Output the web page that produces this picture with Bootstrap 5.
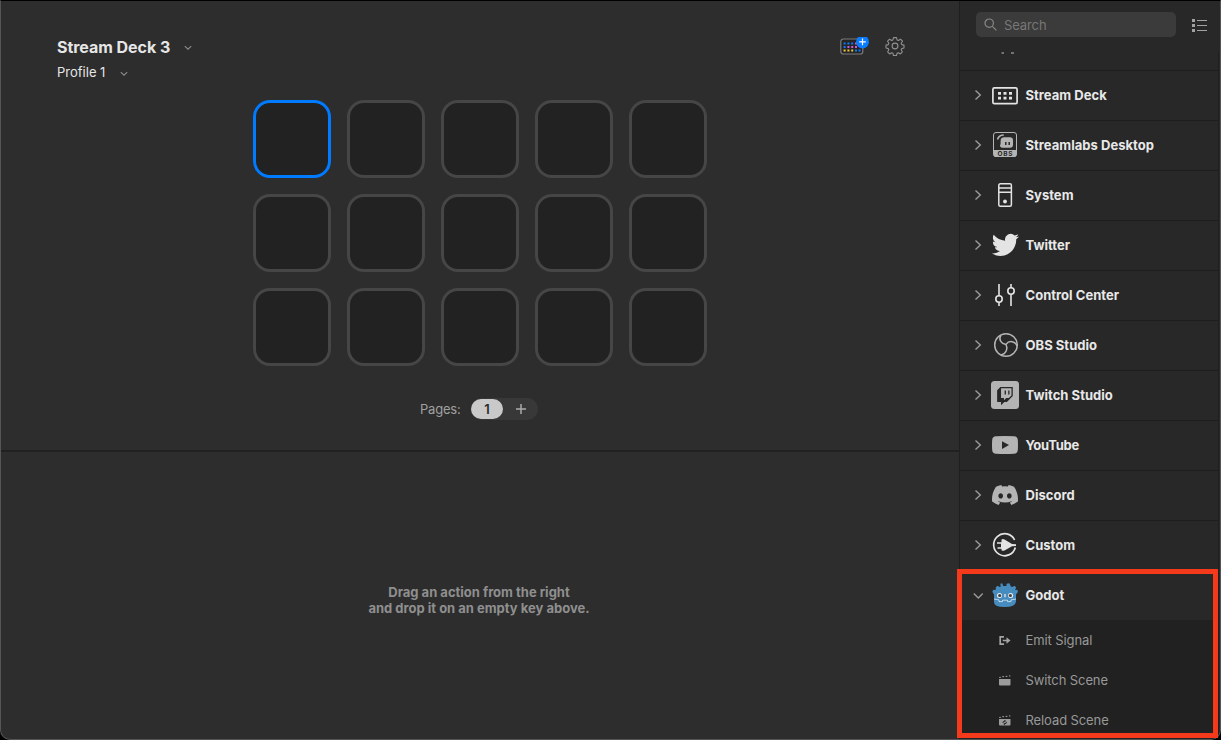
<!DOCTYPE html>
<html lang="en">
<head>
<meta charset="utf-8">
<title>Stream Deck</title>
<link rel="stylesheet" href="https://cdn.jsdelivr.net/npm/bootstrap@5.3.0/dist/css/bootstrap.min.css">
<style>
body{font-family:Inter,"Liberation Sans",sans-serif;font-size:13px;line-height:16px;background:#000;color:#e6e6e6;height:740px;overflow:hidden}
svg{display:block;flex:none}
.window{height:740px;border:1px solid #555;border-top-color:#000;border-radius:0 0 10px 10px;background:#2d2d2d;overflow:hidden}
.deck{width:959px;border-right:1px solid #1f1f1f}
.canvas-area{height:451px;border-bottom:2px solid #212121;padding:36px 54px 0 56px}
.device{font-size:16px;line-height:20px;letter-spacing:-.04px;font-weight:700}
.profile{letter-spacing:0;margin-top:7px}
.keys{display:grid;grid-template-columns:repeat(5,78px);grid-auto-rows:78px;gap:16px;justify-content:center;margin:20px 2px 0 0}
.key{border:3px solid #464646;border-radius:17px;background:#222}
.key.active{border-color:#007aff}
.pages{color:#a0a0a0;margin:32px 0 0 363px;letter-spacing:-.2px}
.pager{width:67px;height:22px;background:#383838;margin-right:367px}
.page-now{width:32px;height:20px;background:#c9c9c9;color:#2a2a2a;font-weight:600;line-height:21px}
.hint{color:#8f8f8f;font-weight:700;margin:9px 2px 0 0}
.actions{width:261px;background:#282828}
.top-tools{height:51px;padding:11px 13px 0 16px}
.search{width:200px;height:25px;border-radius:5px;background:#3b3b3b;color:#777;padding-left:8px;gap:7px;letter-spacing:-.1px}
.list{width:259px;border-right:1px solid #1f1f1f}
.stub{height:18px;padding-left:41px}
.plugin{height:50px;border-top:1px solid #1e1e1e;padding-left:13px;font-weight:700;color:#e8e8e8}
.plugin .arrow{margin:0 7px 2px 0}
.plugin span{margin:0 0 2px 5.500px;letter-spacing:.03px}
.children{background:#212121;height:120px;color:#989898}
.child{height:40px;padding-left:37px}
.child span{margin-left:13.500px;letter-spacing:-.1px}
.marker{position:absolute;left:957px;top:569px;width:261px;height:169px;border:5px solid #f5391b;z-index:3}
</style>
</head>
<body>
<svg width="0" height="0" class="position-absolute"><defs>
<symbol id="chev" viewBox="0 0 10 12"><path d="M2.500 1.500 7.300 6 2.500 10.500" fill="none" stroke="#9a9a9a" stroke-width="1.400"/></symbol>
<symbol id="down" viewBox="0 0 8 6"><path d="M.8 1.200 4 4.200 7.200 1.200" fill="none" stroke="#8c8c8c" stroke-width="1.100"/></symbol>
</defs></svg>
<div class="window d-flex">
  <main class="deck d-flex flex-column flex-shrink-0">
    <section class="canvas-area">
      <div class="d-flex justify-content-between">
        <div>
          <div class="device d-flex align-items-center"><span>Stream Deck 3</span><svg width="8" height="6" style="margin:2px 0 0 14px"><use href="#down"/></svg></div>
          <div class="profile d-flex align-items-center"><span>Profile 1</span><svg width="8" height="6" style="margin:3px 0 0 15px"><use href="#down"/></svg></div>
        </div>
        <div class="d-flex">
          <svg width="65" height="24" viewBox="0 0 65 24">
            <rect x=".8" y="2" width="22" height="15" rx="2.500" fill="#252525" stroke="#7c7c7c" stroke-width="1.200"/>
            <path d="M3.600 5.600h2v2h-2zM7.400 5.600h2v2h-2zM11.200 5.600h2v2h-2zM3.600 9h2v2h-2zM15 12.600h2v2h-2zM18.600 12.600h2v2h-2z" fill="#0a7cff"/>
            <path d="M7.400 9h2v2h-2zM11.200 9h2v2h-2zM15 9h2v2h-2zM15 5.600h2v2h-2z" fill="#d25ad2"/>
            <path d="M3.600 12.600h2v2h-2zM7.400 12.600h2v2h-2zM11.200 12.600h2v2h-2z" fill="#f0c93a"/>
            <circle cx="22.500" cy="4.900" r="6.500" fill="#0a7cff"/><path d="M19.200 4.900h6.600M22.500 1.600v6.600" stroke="#fff" stroke-width="1.200"/>
            <g transform="translate(55 9)" fill="none" stroke="#909090" stroke-width="1.100"><circle r="2.900"/>
            <path stroke-linejoin="round" d="M-1.500-8.400h3l.6 2.300 1.300.6 2.100-1.300 2 2-1.300 2.100.6 1.300 2.200.5v2.900l-2.300.6-.5 1.200 1.200 2.100-2 2-2.100-1.200-1.200.5-.6 2.300h-3l-.6-2.300-1.200-.5-2.100 1.200-2-2 1.200-2.100-.5-1.200-2.300-.6v-2.900l2.300-.5.500-1.300-1.200-2.100 2-2 2.100 1.300 1.200-.6z"/></g>
          </svg>
        </div>
      </div>
      <div class="keys">
        <div class="key active"></div><div class="key"></div><div class="key"></div><div class="key"></div><div class="key"></div>
        <div class="key"></div><div class="key"></div><div class="key"></div><div class="key"></div><div class="key"></div>
        <div class="key"></div><div class="key"></div><div class="key"></div><div class="key"></div><div class="key"></div>
      </div>
      <div class="pages d-flex align-items-center"><span>Pages:</span>
        <div class="pager rounded-pill d-flex align-items-center ms-auto"><span class="page-now rounded-pill text-center">1</span>
        <svg class="ms-2" width="20" height="20"><path d="M5 10h10M10 5v10" stroke="#aaa" stroke-width="1.500"/></svg></div>
      </div>
    </section>
    <section class="flex-fill d-flex align-items-center justify-content-center text-center">
      <p class="hint">Drag an action from the right<br>and drop it on an empty key above.</p>
    </section>
  </main>
  <aside class="actions flex-shrink-0">
    <div class="top-tools d-flex justify-content-between">
      <div class="search d-flex align-items-center"><svg width="13" height="13" fill="none" stroke="#888" stroke-width="1.200"><circle cx="5.200" cy="5.200" r="4.200"/><path d="m8.400 8.400 4 4"/></svg><span>Search</span></div>
      <svg width="17" height="27" viewBox="0 0 17 27"><path d="M1 7h3v3H1zM1 12h3v3H1zM1 17h3v3H1z" fill="#a2a2a2"/><path d="M6 8.500h10M6 13.500h10M6 18.500h10" stroke="#a2a2a2" stroke-width="1"/></svg>
    </div>
    <div class="list">
      <div class="stub"><svg width="14" height="2"><path d="M.5 1h2.500M10 1h3" stroke="#bbb" stroke-width="1"/></svg></div>
      <div class="plugin d-flex align-items-center"><svg width="10" height="12" class="arrow"><use href="#chev"/></svg>
        <svg width="30" height="31"><rect x="2.900" y="7.900" width="24.200" height="15.800" rx="1.500" fill="none" stroke="#e4e4e4" stroke-width="1.700"/><path fill="#e4e4e4" d="M8 12h3v2.800H8zM13.500 12h3v2.800h-3zM19 12h3v2.800h-3zM8 16.800h3v2.600H8zM13.500 16.800h3v2.600h-3zM19 16.800h3v2.600h-3z"/></svg><span>Stream Deck</span></div>
      <div class="plugin d-flex align-items-center"><svg width="10" height="12" class="arrow"><use href="#chev"/></svg>
        <svg width="30" height="31"><rect x="3.500" y="2.500" width="23" height="24" rx="2.500" fill="none" stroke="#b4b4b4"/><path d="M3.500 20h23v4.500a2.500 2.500 0 0 1-2.500 2.500H6a2.500 2.500 0 0 1-2.500-2.500z" fill="#b4b4b4"/><path d="M7.800 8.800A6 6 0 0 1 13 5" fill="none" stroke="#b4b4b4" stroke-width="1.700" stroke-linecap="round"/><path d="M14.300 7.300h5.700q3 0 3 3v4.500q0 3-3 3h-6.500q-3.500 0-3.500-2.300 0-.7.600-1.200V11q0-3.700 3.700-3.700z" fill="#b4b4b4"/><path d="M15.800 12v3M19.200 12v3" stroke="#282828" stroke-width="1.500"/><text x="15.300" y="26" text-anchor="middle" font-size="6.500" font-weight="700" letter-spacing=".7" fill="#282828">OBS</text></svg><span>Streamlabs Desktop</span></div>
      <div class="plugin d-flex align-items-center"><svg width="10" height="12" class="arrow"><use href="#chev"/></svg>
        <svg width="30" height="31"><rect x="8.800" y="3.800" width="12.600" height="22.400" rx="1.500" fill="none" stroke="#e4e4e4" stroke-width="1.500"/><path d="M9 8h12M9 12.300h12" stroke="#e4e4e4" stroke-width="1.400"/><circle cx="15" cy="21.500" r="1.900" fill="#e4e4e4"/></svg><span>System</span></div>
      <div class="plugin d-flex align-items-center"><svg width="10" height="12" class="arrow"><use href="#chev"/></svg>
        <svg width="30" height="31"><path transform="translate(1.800 .4) scale(1.700)" fill="#e4e4e4" d="M5.026 15c6.038 0 9.341-5.003 9.341-9.334 0-.14 0-.282-.006-.422A6.685 6.685 0 0 0 16 3.542a6.658 6.658 0 0 1-1.889.518 3.301 3.301 0 0 0 1.447-1.817 6.533 6.533 0 0 1-2.087.793A3.286 3.286 0 0 0 7.875 6.030a9.325 9.325 0 0 1-6.767-3.429 3.289 3.289 0 0 0 1.018 4.382A3.323 3.323 0 0 1 .64 6.575v.045a3.288 3.288 0 0 0 2.632 3.218 3.203 3.203 0 0 1-.865.115 3.230 3.230 0 0 1-.614-.057 3.283 3.283 0 0 0 3.067 2.277A6.588 6.588 0 0 1 .78 13.580a6.320 6.320 0 0 1-.78-.045A9.344 9.344 0 0 0 5.026 15z"/></svg><span>Twitter</span></div>
      <div class="plugin d-flex align-items-center"><svg width="10" height="12" class="arrow"><use href="#chev"/></svg>
        <svg width="30" height="31" fill="#282828" stroke="#e4e4e4" stroke-width="1.600"><path d="M9 4v22M21 4v22"/><circle cx="9" cy="19" r="3.200"/><circle cx="21" cy="11" r="3.200"/></svg><span>Control Center</span></div>
      <div class="plugin d-flex align-items-center"><svg width="10" height="12" class="arrow"><use href="#chev"/></svg>
        <svg width="30" height="31" fill="none" stroke="#b4b4b4" stroke-width="1.500"><circle cx="16" cy="15" r="11.300"/><path d="M11 5.200C8.200 9.300 11 13.600 16 14.400M16 14.400c3-4.200 9.300-3.600 11 1.600M16 14.400c2.200 4.500 0 9.500-5 10.600"/></svg><span>OBS Studio</span></div>
      <div class="plugin d-flex align-items-center"><svg width="10" height="12" class="arrow"><use href="#chev"/></svg>
        <svg width="30" height="31"><rect x="1" y="1" width="28" height="28" rx="3.500" fill="#b4b4b4"/><path transform="translate(6 7) scale(1.140)" fill="#282828" d="M3.857 0 1 2.857v10.286h3.429V16l2.857-2.857H9.570L14.714 8V0H3.857zm9.714 7.429-2.285 2.285H9l-2 2v-2H4.429V1.143h9.142v6.286zM11.857 3.143h-1.143V6.570h1.143V3.143zm-3.143 0H7.571V6.570h1.143V3.143z"/></svg><span>Twitch Studio</span></div>
      <div class="plugin d-flex align-items-center"><svg width="10" height="12" class="arrow"><use href="#chev"/></svg>
        <svg width="30" height="31"><path d="M6 6.300q9-.7 18 0 3.500.2 3.800 3.500.4 5.200 0 10.400-.3 3.300-3.800 3.500-9 .7-18 0-3.500-.2-3.800-3.500-.4-5.200 0-10.400.3-3.300 3.800-3.500z" fill="#b4b4b4"/><path d="m12 11.200 7 3.900-7 3.900z" fill="#282828"/></svg><span style="letter-spacing:-.25px">YouTube</span></div>
      <div class="plugin d-flex align-items-center"><svg width="10" height="12" class="arrow"><use href="#chev"/></svg>
        <svg width="30" height="31"><path transform="translate(2 2) scale(1.625)" fill="#b4b4b4" d="M13.545 2.907a13.227 13.227 0 0 0-3.257-1.011.05.05 0 0 0-.052.025c-.141.25-.297.577-.406.833a12.190 12.190 0 0 0-3.658 0 8.258 8.258 0 0 0-.412-.833.051.051 0 0 0-.052-.025c-1.125.194-2.220.534-3.257 1.011a.041.041 0 0 0-.021.018C.356 6.024-.213 9.047.066 12.032c.001.014.01.028.021.037a13.276 13.276 0 0 0 3.995 2.020.05.05 0 0 0 .056-.019c.308-.42.582-.863.818-1.329a.05.05 0 0 0-.01-.059.051.051 0 0 0-.018-.011 8.875 8.875 0 0 1-1.248-.595.05.05 0 0 1-.02-.066.051.051 0 0 1 .015-.019c.084-.063.168-.129.248-.195a.05.05 0 0 1 .051-.007c2.619 1.196 5.454 1.196 8.041 0a.052.052 0 0 1 .053.007c.08.066.164.132.248.195a.051.051 0 0 1-.004.085 8.254 8.254 0 0 1-1.249.594.05.05 0 0 0-.03.03.052.052 0 0 0 .003.041c.24.465.515.909.817 1.329a.05.05 0 0 0 .056.019 13.235 13.235 0 0 0 4.001-2.020.049.049 0 0 0 .021-.037c.334-3.451-.559-6.449-2.366-9.106a.034.034 0 0 0-.02-.019Zm-8.198 7.307c-.789 0-1.438-.724-1.438-1.612 0-.889.637-1.613 1.438-1.613.807 0 1.450.73 1.438 1.613 0 .888-.637 1.612-1.438 1.612Zm5.316 0c-.788 0-1.438-.724-1.438-1.612 0-.889.637-1.613 1.438-1.613.807 0 1.451.73 1.438 1.613 0 .888-.631 1.612-1.438 1.612Z"/></svg><span>Discord</span></div>
      <div class="plugin d-flex align-items-center"><svg width="10" height="12" class="arrow"><use href="#chev"/></svg>
        <svg width="30" height="31"><path d="M24.600 10A11 11 0 1 0 25.300 17.500" fill="none" stroke="#e4e4e4" stroke-width="1.700"/><path d="M11.500 9.500q1.500-1 3 0l7.500 4.600 4 .2v1.600l-4 .4-7.500 4.200q-1.500.8-3-.2v-1.600H7.500v-1.500h3.500v-3.400H7v-1.500h4.500z" fill="#e4e4e4"/></svg><span>Custom</span></div>
      <div class="plugin d-flex align-items-center"><svg width="10" height="12" class="arrow"><path d="M.8 4.500 5.300 9l4.500-4.500" fill="none" stroke="#9a9a9a" stroke-width="1.400"/></svg>
        <svg width="30" height="31"><path d="M12.300 3.200 13.200 6h3.300V3.700l3-.5 1.200 3 1.500.8 2.500-1.200 1.500 2-1.200 2.200 2.200-.2.800 2-2 2.700v7q-.5 5.600-11.500 5.600T4 21.500v-7l-1.700-2.800 1-2 2.500.2-.1-2.400 1.700-1.800L9.800 7l1-.5-.5-2.700z" fill="#478cbf"/><circle cx="9.500" cy="15.400" r="2.500" fill="#f2f2f2"/><circle cx="20.600" cy="15.400" r="2.500" fill="#f2f2f2"/><circle cx="9.700" cy="15.500" r="1.600" fill="#414042"/><circle cx="20.400" cy="15.500" r="1.600" fill="#414042"/><path d="M15 14v3.300" stroke="#f2f2f2" stroke-width="1.200"/><path d="m4 19 5 .9v1.700h3.500v-1.400h5v1.400H21v-1.700l5-.9" fill="none" stroke="#dce8f0" stroke-width=".8"/></svg><span>Godot</span></div>
      <div class="children">
        <div class="child d-flex align-items-center"><svg width="15" height="15"><path d="M7 3.800H3.200v7.400H7M5.800 7.500H11" fill="none" stroke="#a4a4a4" stroke-width="1.700"/><path d="m9.500 4.300 4 3.200-4 3.200z" fill="#a4a4a4"/></svg><span>Emit Signal</span></div>
        <div class="child d-flex align-items-center"><svg width="15" height="15"><path d="M2 6h11.500v5.500q0 1-1 1H3q-1 0-1-1zM2 4l1.500-.3.800 1H2zM5 3.300l1.700-.2.600 1-1.700.2zM8.400 2.900l1.600-.2.700 1-1.700.2zM11.700 2.500l1.500-.2.200 1.200-1 .1z" fill="#9c9c9c"/></svg><span>Switch Scene</span></div>
        <div class="child d-flex align-items-center"><svg width="15" height="15"><path d="M2 6h11.500v5.500q0 1-1 1H3q-1 0-1-1zM2 4l1.500-.3.800 1H2zM5 3.300l1.700-.2.600 1-1.700.2zM8.400 2.900l1.600-.2.700 1-1.700.2zM11.700 2.500l1.500-.2.200 1.200-1 .1z" fill="#9c9c9c"/><path d="M5.900 10q0-1.900 2-1.900M9.500 8.900q0 2-2 2" fill="none" stroke="#222"/><path d="m7.500 6.800 1.600 1.200-1.600 1.100zM7.900 9.800l-1.600 1.100 1.600 1z" fill="#222"/></svg><span>Reload Scene</span></div>
      </div>
    </div>
  </aside>
</div>
<div class="marker"></div>
<script src="https://cdn.jsdelivr.net/npm/bootstrap@5.3.0/dist/js/bootstrap.bundle.min.js"></script>
</body>
</html>
